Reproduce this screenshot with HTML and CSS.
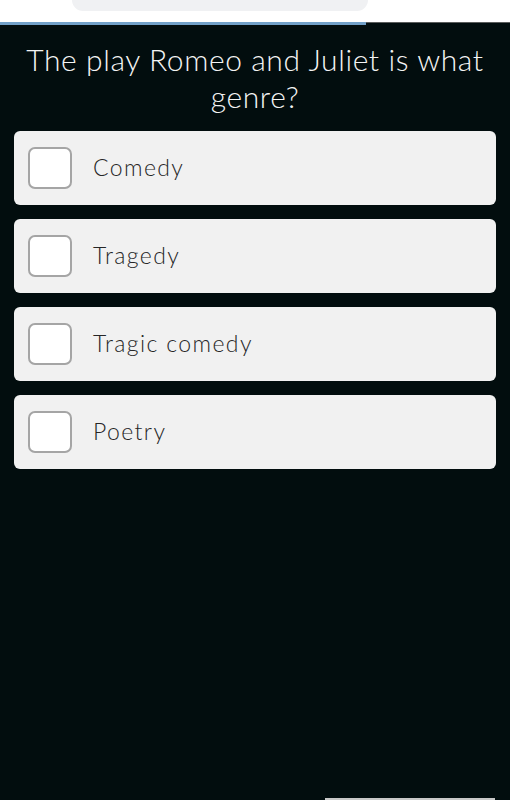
FILE: index.html
```html
<!DOCTYPE html>
<html>
<head lang="en">
    <meta charset="UTF-8">
    <title>Quiz</title>
    <link rel="stylesheet" href="styles.css">
</head>
<body>
<div id="top">
    <div class="pill"></div>
</div>
<div id="progress">
    <div class="done"></div>
    <div class="rest"></div>
</div>
<div id="quiz">
    <h1 class="question">The play Romeo and Juliet is what genre?</h1>
    <ul class="answers">
        <li><span class="box"></span><span class="label">Comedy</span></li>
        <li><span class="box"></span><span class="label">Tragedy</span></li>
        <li><span class="box"></span><span class="label">Tragic comedy</span></li>
        <li><span class="box"></span><span class="label">Poetry</span></li>
    </ul>
</div>
<div class="home-bar"></div>
</body>
</html>
```

FILE: styles.css
```css
*{
    margin: 0;
    padding: 0;
    box-sizing: border-box;
}
ol,ul{
    list-style: none;
}
html,body{
    height: 100%;
}
body{
    background: #020d0e;
    font-family: Lato, "Open Sans", sans-serif;
    overflow: hidden;
    position: relative;
}
#top{
    height: 22px;
    background: #ffffff;
    display: flex;
}
#top .pill{
    width: 296px;
    height: 11px;
    margin-left: 72px;
    background: #f0f1f3;
    border-radius: 0 0 12px 12px;
}
#progress{
    display: flex;
    height: 3px;
}
#progress .done{
    width: 366px;
    background: #72a0c8;
}
#progress .rest{
    flex: 1;
    border-top: 1px solid #5a5c5c;
}
#quiz{
    padding: 16px 14px 0;
}
.question{
    color: #f4f4f4;
    font-weight: 300;
    font-size: 30px;
    line-height: 37px;
    letter-spacing: 0.6px;
    text-align: center;
    padding: 0 4px;
}
.answers{
    margin-top: 16px;
    display: flex;
    flex-direction: column;
    gap: 14px;
}
.answers li{
    height: 74px;
    background: #f1f1f1;
    border-radius: 6px;
    display: flex;
    align-items: center;
    padding-left: 14px;
}
.answers .box{
    width: 44px;
    height: 42px;
    background: #ffffff;
    border: 2px solid #a5a5a5;
    border-radius: 7px;
    flex-shrink: 0;
}
.answers .label{
    margin-left: 21px;
    margin-bottom: 3px;
    font-size: 23px;
    font-weight: 300;
    color: #262626;
    letter-spacing: 1.4px;
}
.home-bar{
    position: absolute;
    left: 325px;
    bottom: 0;
    width: 170px;
    height: 2px;
    background: #c8c8c8;
}
```
